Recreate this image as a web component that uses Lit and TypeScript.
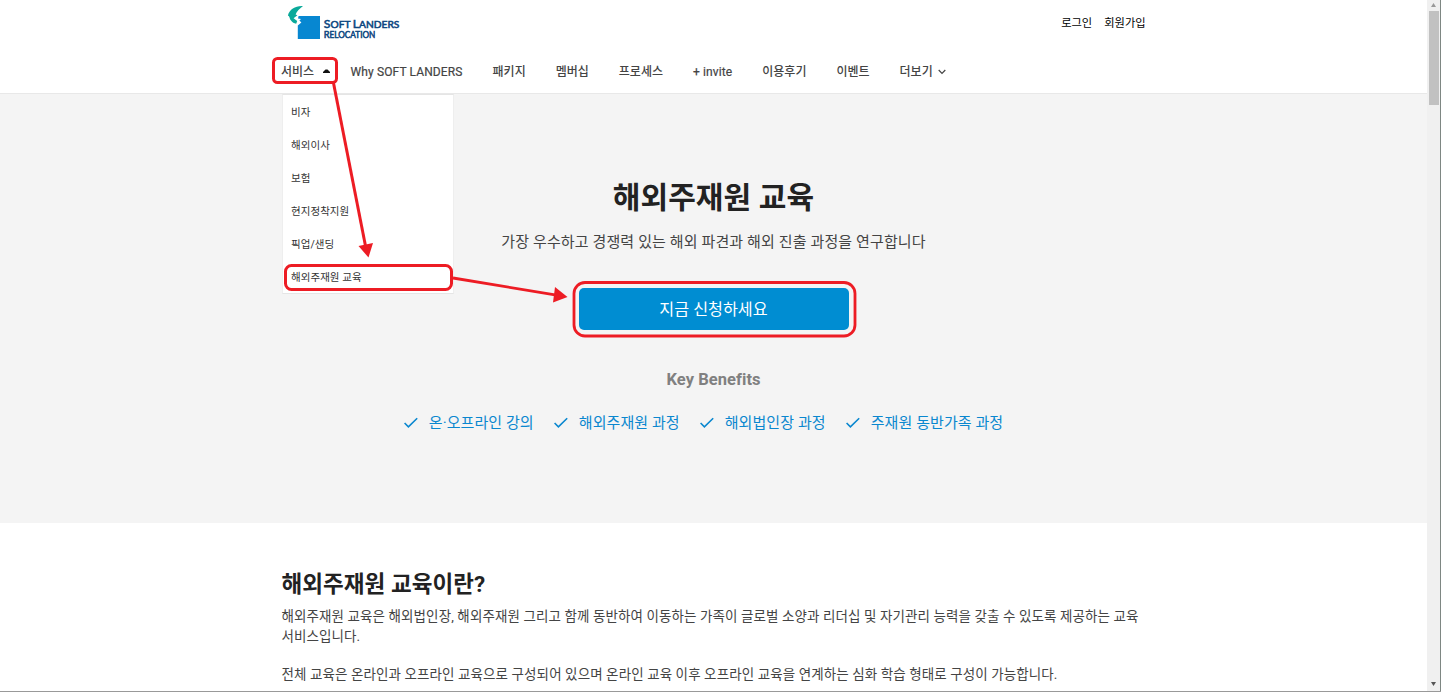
import { LitElement, html, css, svg } from "lit";
import { customElement } from "lit/decorators.js";

const NAV = ["패키지", "멤버십", "프로세스", "+ invite", "이용후기", "이벤트"];
const SERVICES = ["비자", "해외이사", "보험", "현지정착지원", "픽업/샌딩", "해외주재원 교육"];
const BENEFITS = ["온·오프라인 강의", "해외주재원 과정", "해외법인장 과정", "주재원 동반가족 과정"];

const check = svg`<path d="M0.6 6 L4.4 9.9 L13.2 1.2" fill="none" stroke="#0a87cf" stroke-width="1.6"/>`;

@customElement("site-logo")
class SiteLogo extends LitElement {
  static styles = css`
    :host { display: block; height: 36px; }
    svg { display: block; }
    .word { font-family: Lato, "Open Sans", sans-serif; font-weight: 400; fill: #0b4680; stroke: #0b4680; stroke-width: 0.55; }
  `;
  render() {
    return html`<svg width="116" height="36" viewBox="286 5 116 36">
      <path d="M303 6 C296 5.4 289.6 9 287.9 15.4 C289.8 16 289.4 18.6 291 20.6 C292.4 22.4 294 23.6 296.2 23.8 L297.2 21 L293.6 18.2 L297.4 15.2 L295.6 14.4 C296.6 11.6 299.8 8.6 303 6Z" fill="#0aa99a"/>
      <path d="M298.6 16 H320 V39 H297.8 V25.6 L301.4 22.4 L299.4 20.6 L301 19 L298 18.4Z" fill="#0787d1"/>
      <text class="word" x="323.8" y="27.8" font-size="12" textLength="75.6" lengthAdjust="spacingAndGlyphs">S<tspan font-size="10">OFT </tspan>L<tspan font-size="10">ANDERS</tspan></text>
      <text class="word" x="323.8" y="38.4" font-size="10.4" textLength="51.5" lengthAdjust="spacingAndGlyphs">R<tspan font-size="9.2">ELOCATION</tspan></text>
    </svg>`;
  }
}

@customElement("site-header")
class SiteHeader extends LitElement {
  static styles = css`
    :host { display: block; height: 93px; border-bottom: 1px solid #e8e8e8; background: #fff; }
    .wrap { width: 865px; margin: 0 auto; }
    .top { display: flex; justify-content: space-between; height: 48px; padding: 5px 0 0 5px; box-sizing: border-box; }
    .account { display: flex; gap: 12px; padding: 11px 0.4px 0 0; font-size: 11.25px; line-height: 16px; color: #000; }
    nav { display: flex; height: 47px; align-items: center; font-size: 12px; line-height: 18px; font-weight: 500; color: #444; }
    .item { margin-right: 30px; white-space: nowrap; }
    .service { position: relative; display: flex; align-items: center; width: 69.5px; }
    .service svg { margin-left: 9px; margin-top: -1px; }
    .why { letter-spacing: 0.12px; font-weight: 400; -webkit-text-stroke: 0.2px #444; }
    .more { display: flex; align-items: center; gap: 5.5px; }
    .menu { position: absolute; left: 1px; top: 31px; width: 172px; height: 200px; box-sizing: border-box; padding: 1px 0 0 8px; background: #fff; border: 1px solid #e5e5e5; border-left-color: #eee; border-right-color: #eee; font-size: 10.5px; font-weight: 400; letter-spacing: 0.05px; color: #333; z-index: 2; }
    .entry { height: 33px; line-height: 33px; }
  `;
  render() {
    return html`<div class="wrap">
      <div class="top">
        <site-logo></site-logo>
        <div class="account"><span>로그인</span><span>회원가입</span></div>
      </div>
      <nav>
        <div class="service">서비스<svg width="7" height="4" viewBox="0 0 7 4"><path d="M0 4 V3 L2.5 0.5 H4.5 L7 3 V4Z" fill="#111"/></svg>
          <div class="menu">${SERVICES.map((s) => html`<div class="entry">${s}</div>`)}</div>
        </div>
        <span class="item why">Why SOFT LANDERS</span>
        ${NAV.map((n) => html`<span class="item ${n === "+ invite" ? "why" : ""}">${n}</span>`)}
        <span class="more">더보기<svg width="8" height="6" viewBox="0 0 8 6"><path d="M0.7 1 L4 4.4 L7.3 1" fill="none" stroke="#444" stroke-width="1.2"/></svg></span>
      </nav>
    </div>`;
  }
}

@customElement("page-scrollbar")
class PageScrollbar extends LitElement {
  static styles = css`
    :host { display: flex; flex-direction: column; justify-content: space-between; align-items: center; width: 13px; background: #f0f0f0; border-right: 1px solid #7e8783; box-sizing: content-box; }
    .up { display: flex; flex-direction: column; align-items: center; gap: 4px; padding-top: 3px; }
    .thumb { width: 10px; height: 94px; background: #c1c1c1; }
    .down { padding-bottom: 5px; }
    svg { display: block; }
  `;
  render() {
    return html`<div class="up"><svg width="5" height="4"><path d="M0 4 L2.5 0 L5 4Z" fill="#999"/></svg><div class="thumb"></div></div>
      <svg class="down" width="5" height="4"><path d="M0 0 H5 L2.5 4Z" fill="#555"/></svg>`;
  }
}

@customElement("app-root")
class AppRoot extends LitElement {
  static styles = css`
    :host { display: flex; position: relative; width: 1441px; height: 692px; box-sizing: border-box; overflow: hidden; border-bottom: 1px solid #999; background: #fff; font-family: Roboto, "Noto Sans CJK KR", sans-serif; color: #444; }
    main { flex: 1; min-width: 0; }
    .hero { height: 429px; background: #f4f4f4; display: flex; flex-direction: column; align-items: center; box-sizing: border-box; padding-top: 82px; }
    h1 { margin: 0; font-size: 30px; line-height: 44px; color: #222; font-weight: 700; letter-spacing: 0.1px; }
    .sub { margin: 10px 0 0; font-size: 15px; line-height: 24px; letter-spacing: 0.12px; }
    .cta { margin-top: 34px; width: 270px; height: 42px; border: 0; border-radius: 5px; background: #008dd2; color: #fff; font: inherit; font-size: 16.2px; line-height: 42px; padding: 1px 0 0; }
    h3 { margin: 38px 0 0; font-size: 16.5px; line-height: 24px; color: #808080; font-weight: 700; letter-spacing: 0.06px; }
    .benefits { display: flex; gap: 20px; margin: 19px 20px 0 0; font-size: 15px; line-height: 24px; color: #0a87cf; letter-spacing: 0.08px; }
    .benefit { display: flex; align-items: center; gap: 11px; }
    .about { width: 865px; margin: 0 auto; padding: 44px 0 0 0.5px; box-sizing: border-box; }
    h2 { margin: 0; font-size: 22.5px; line-height: 34px; color: #222; font-weight: 700; letter-spacing: 0.05px; }
    p { margin: 0; }
    .copy { margin-top: 6px; font-size: 13.5px; line-height: 19.5px; letter-spacing: 0.1px; }
    .line { white-space: nowrap; }
    .gap { margin-top: 19px; }
    .marks { position: absolute; left: 0; top: 0; z-index: 5; pointer-events: none; }
  `;
  render() {
    return html`<main>
        <site-header></site-header>
        <section class="hero">
          <h1>해외주재원 교육</h1>
          <p class="sub">가장 우수하고 경쟁력 있는 해외 파견과 해외 진출 과정을 연구합니다</p>
          <button class="cta">지금 신청하세요</button>
          <h3>Key Benefits</h3>
          <div class="benefits">${BENEFITS.map((b) => html`<div class="benefit"><svg width="14" height="12" viewBox="0 0 14 12">${check}</svg><span>${b}</span></div>`)}</div>
        </section>
        <section class="about">
          <h2>해외주재원 교육이란?</h2>
          <div class="copy">
            <p class="line">해외주재원 교육은 해외법인장, 해외주재원 그리고 함께 동반하여 이동하는 가족이 글로벌 소양과 리더십 및 자기관리 능력을 갖출 수 있도록 제공하는 교육</p>
            <p class="line">서비스입니다.</p>
            <p class="line gap">전체 교육은 온라인과 오프라인 교육으로 구성되어 있으며 온라인 교육 이후 오프라인 교육을 연계하는 심화 학습 형태로 구성이 가능합니다.</p>
          </div>
        </section>
      </main>
      <page-scrollbar></page-scrollbar>
      <svg class="marks" width="1441" height="692" fill="none" stroke="#ed1c24" stroke-width="3">
        <rect x="273.5" y="58.5" width="63" height="24" rx="4"/>
        <rect x="285.5" y="265.5" width="166" height="24" rx="6"/>
        <rect x="574" y="282.5" width="281" height="53.5" rx="11" stroke-width="2.8"/>
        <path d="M333.5 83 L365.5 246"/>
        <path d="M453 278 L555 294.8" stroke-width="2.8"/>
        <path d="M358.5 246 L373 243 L368.5 257.5Z" fill="#ed1c24" stroke="none"/>
        <path d="M555 287 L567.5 297 L553 302.5Z" fill="#ed1c24" stroke="none"/>
      </svg>`;
  }
}
